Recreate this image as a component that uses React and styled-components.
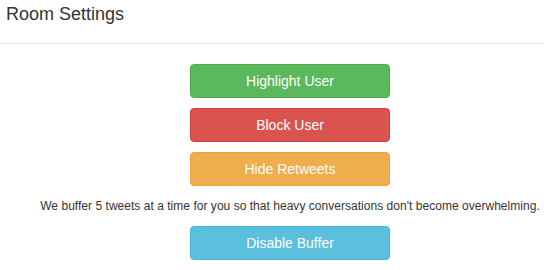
import React from 'react';
import styled, { createGlobalStyle } from 'styled-components';

const GlobalStyle = createGlobalStyle`
    html, body {
        margin: 0;
        padding: 0;
        background: #fff;
    }
    body {
        font-family: "Liberation Sans", Arial, Helvetica, sans-serif;
        color: #333;
    }
`

const Header = styled.div`
    padding: 4px 6px 19px;
    border-bottom: 1px solid #e5e5e5;
`

const Title = styled.h4`
    margin: 0;
    font-size: 18px;
    font-weight: normal;
    line-height: 20px;
    color: #333;
`

const Body = styled.div`
    padding: 20px 0 10px 36px;
    display: flex;
    flex-direction: column;
    align-items: center;
`

const colors = {
    success: { bg: '#5cb85c', border: '#4cae4c' },
    danger: { bg: '#d9534f', border: '#d43f3a' },
    warning: { bg: '#f0ad4e', border: '#eea236' },
    info: { bg: '#5bc0de', border: '#46b8da' },
};

const Button = styled.button`
    box-sizing: border-box;
    width: 200px;
    height: 34px;
    margin-bottom: 10px;
    padding: 0;
    font-family: inherit;
    font-size: 14px;
    color: #fff;
    background: ${p => colors[p.$kind].bg};
    border: 1px solid ${p => colors[p.$kind].border};
    border-radius: 4px;
    cursor: pointer;
`

const Note = styled.p`
    margin: 1px 0 11px;
    font-size: 12px;
    letter-spacing: 0.03px;
    line-height: 18px;
    white-space: nowrap;
`

function App() {
    return (
        <>
        <GlobalStyle />
        <Header>
            <Title>Room Settings</Title>
        </Header>
        <Body>
            <Button $kind="success">Highlight User</Button>
            <Button $kind="danger">Block User</Button>
            <Button $kind="warning">Hide Retweets</Button>
            <Note>We buffer 5 tweets at a time for you so that heavy conversations don't become overwhelming.</Note>
            <Button $kind="info">Disable Buffer</Button>
        </Body>
        </>
    );
}

export default App;
